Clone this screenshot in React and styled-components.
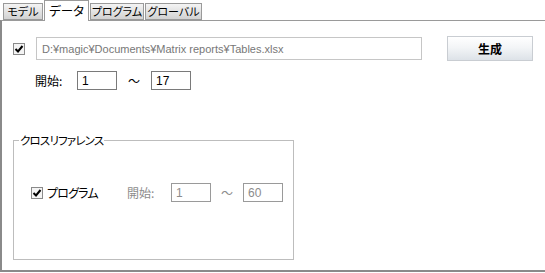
import React from 'react';
import styled, { createGlobalStyle } from 'styled-components';

const Global = createGlobalStyle`
  html, body { margin: 0; padding: 0; background: #ffffff; }
  body {
    font-family: "Noto Sans CJK JP", "Liberation Sans", sans-serif;
    font-size: 12px;
    font-feature-settings: "palt";
    color: #000;
  }
`;

const Page = styled.div`
  width: 545px;
  height: 273px;
  display: flex;
  flex-direction: column;
  overflow: hidden;
`;

const TabStrip = styled.div`
  display: flex;
  align-items: flex-end;
  height: 20px;
  padding-left: 3px;
  gap: 1px;
`;

const Tab = styled.div`
  box-sizing: border-box;
  width: ${p => p.w}px;
  height: ${p => (p.active ? 21 : 17)}px;
  border: 1px solid #9a9a9a;
  border-bottom: ${p => (p.active ? 'none' : '1px solid #9a9a9a')};
  background: ${p => (p.active ? '#ffffff' : 'linear-gradient(#f4f4f4, #d2d2d2)')};
  display: flex;
  align-items: center;
  justify-content: center;
  white-space: nowrap;
  font-size: ${p => (p.active ? 12.5 : 11)}px;
  line-height: 1;
  position: relative;
  top: ${p => (p.active ? 1 : 0)}px;
  z-index: ${p => (p.active ? 2 : 1)};
`;

const Panel = styled.div`
  flex: 1;
  box-sizing: border-box;
  border-left: 2px solid #8a8a8a;
  border-top: 1px solid #9a9a9a;
  border-bottom: 2px solid #8a8a8a;
  margin-bottom: 1px;
  padding: 15px 0 0 11px;
  display: flex;
  flex-direction: column;
  align-items: flex-start;
`;

const Row = styled.div`
  display: flex;
  align-items: center;
  white-space: nowrap;
`;

const Check = styled.span`
  box-sizing: border-box;
  width: 12px;
  height: 12px;
  border: 1px solid #8a8a8a;
  background: #f4f4f4;
  display: inline-flex;
  align-items: center;
  justify-content: center;
  flex: none;
`;

const PathBox = styled.div`
  box-sizing: border-box;
  margin-left: 11px;
  width: 386px;
  height: 23px;
  border: 1px solid #c6c6c6;
  color: #777;
  padding-left: 5px;
  display: flex;
  align-items: center;
  font-family: "Liberation Sans", sans-serif;
  font-size: 11px;
`;

const Button = styled.div`
  box-sizing: border-box;
  margin-left: 25px;
  width: 86px;
  height: 25px;
  border: 1px solid #c9cdd2;
  background: linear-gradient(#ffffff 0%, #f3f5f7 45%, #dde2e8 100%);
  display: flex;
  align-items: center;
  justify-content: center;
  font-weight: bold;
  font-size: 12px;
`;

const Label = styled.span`
  color: ${p => (p.dim ? '#8c8c8c' : '#000')};
  width: ${p => p.w}px;
  letter-spacing: ${p => p.tight || 0}px;
  flex: none;
`;

const Num = styled.div`
  box-sizing: border-box;
  width: 40px;
  height: 19px;
  border: 1px solid ${p => (p.dim ? '#9a9a9a' : '#7a7a7a')};
  color: ${p => (p.dim ? '#8c8c8c' : '#000')};
  padding-left: 4px;
  display: flex;
  align-items: center;
  font-family: "Liberation Sans", sans-serif;
  font-size: 12px;
`;

const Tilde = styled.span`
  color: ${p => (p.dim ? '#8c8c8c' : '#000')};
  width: ${p => p.w}px;
  text-align: center;
  flex: none;
`;

const Group = styled.fieldset`
  box-sizing: border-box;
  width: 281px;
  height: 127px;
  margin: 43px 0 0 0;
  padding: 36px 0 0 17px;
  border: 1px solid #bdbdbd;
  min-inline-size: 0;
`;

const Legend = styled.legend`
  padding: 0 1px;
  margin-left: -12px;
  font-size: 11.5px;
  letter-spacing: -0.8px;
  line-height: 14px;
`;

const Tick = () => (
  <svg width="10" height="10" viewBox="0 0 10 10">
    <path d="M1.5 5 L4 7.5 L8.5 2" fill="none" stroke="#000" strokeWidth="2" />
  </svg>
);

export default function App() {
  return (
    <Page>
      <Global />
      <TabStrip>
        <Tab w={40}>モデル</Tab>
        <Tab w={45} active>データ</Tab>
        <Tab w={54}>プログラム</Tab>
        <Tab w={57}>グローバル</Tab>
      </TabStrip>
      <Panel>
        <Row>
          <Check><Tick /></Check>
          <PathBox>D:¥magic¥Documents¥Matrix reports¥Tables.xlsx</PathBox>
          <Button>生成</Button>
        </Row>
        <Row style={{ marginTop: 10, marginLeft: 22 }}>
          <Label w={42}>開始:</Label>
          <Num>1</Num>
          <Tilde w={34}>～</Tilde>
          <Num>17</Num>
        </Row>
        <Group>
          <Legend>クロスリファレンス</Legend>
          <Row>
            <Check><Tick /></Check>
            <Label w={80} tight={-0.8} style={{ marginLeft: 4 }}>プログラム</Label>
            <Label w={44} dim>開始:</Label>
            <Num dim>1</Num>
            <Tilde w={32} dim>～</Tilde>
            <Num dim>60</Num>
          </Row>
        </Group>
      </Panel>
    </Page>
  );
}
